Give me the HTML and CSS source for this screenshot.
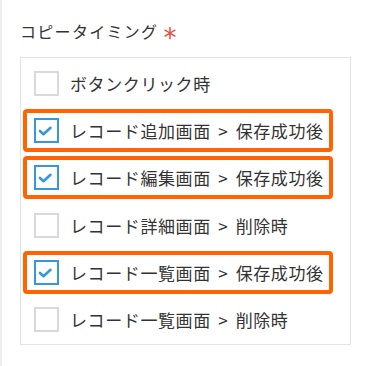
FILE: index.html
```html
<!DOCTYPE html>
<html>

<head>
    <meta charset="utf-8" />
    <title>コピータイミング</title>
    <link rel="stylesheet" href="styles.css">
</head>

<body>
    <div class="field">
        <div class="label">コピータイミング<span class="required">*</span></div>
        <div class="options">
            <label class="option">
                <span class="box"></span>
                <span class="text">ボタンクリック時</span>
            </label>
            <label class="option marked">
                <span class="box checked">
                    <svg viewBox="0 0 21 21"><polyline points="4,11 7.5,14.2 14.5,7.8" /></svg>
                </span>
                <span class="text">レコード追加画面 &gt; 保存成功後</span>
            </label>
            <label class="option marked">
                <span class="box checked">
                    <svg viewBox="0 0 21 21"><polyline points="4,11 7.5,14.2 14.5,7.8" /></svg>
                </span>
                <span class="text">レコード編集画面 &gt; 保存成功後</span>
            </label>
            <label class="option">
                <span class="box"></span>
                <span class="text">レコード詳細画面 &gt; 削除時</span>
            </label>
            <label class="option marked">
                <span class="box checked">
                    <svg viewBox="0 0 21 21"><polyline points="4,11 7.5,14.2 14.5,7.8" /></svg>
                </span>
                <span class="text">レコード一覧画面 &gt; 保存成功後</span>
            </label>
            <label class="option">
                <span class="box"></span>
                <span class="text">レコード一覧画面 &gt; 削除時</span>
            </label>
        </div>
    </div>
</body>

</html>
```

FILE: styles.css
```css
* {
    font-family: "Noto Sans CJK JP", "Noto Sans", sans-serif;
    box-sizing: border-box;
    padding: 0;
    margin: 0;
}

body {
    width: 100vw;
    height: 100vh;
    background: #fff;
    border-left: 2px solid #ededed;
    color: #333;
}

.field {
    padding: 19px 0 0 18px;
}

.label {
    font-size: 16px;
    line-height: 24px;
    letter-spacing: 1.3px;
    height: 24px;
}

.required {
    color: #e74c3c;
    font-family: "DejaVu Sans", sans-serif;
    font-size: 26px;
    line-height: 0;
    vertical-align: -9px;
    margin-left: 5px;
}

.options {
    margin-top: 14px;
    width: 331px;
    border: 1px solid #e3e3e3;
    padding: 4px 0 3px 2px;
    display: flex;
    flex-direction: column;
    align-items: flex-start;
    gap: 4.2px;
}

.option {
    display: flex;
    align-items: center;
    height: 43px;
    padding: 0 5px 0 7px;
    border: 4px solid transparent;
    border-radius: 4px;
}

.option.marked {
    border-color: #ff6400;
}

.box {
    width: 25px;
    height: 25px;
    border: 2px solid #d9d9d9;
    flex-shrink: 0;
}

.box.checked {
    border-color: #3498db;
}

.box svg {
    display: block;
    width: 21px;
    height: 21px;
    fill: none;
    stroke: #3498db;
    stroke-width: 2.6;
    stroke-linecap: round;
    stroke-linejoin: round;
}

.text {
    margin-left: 11px;
    font-size: 17px;
    letter-spacing: 0.6px;
    word-spacing: 3px;
    white-space: nowrap;
}
```
